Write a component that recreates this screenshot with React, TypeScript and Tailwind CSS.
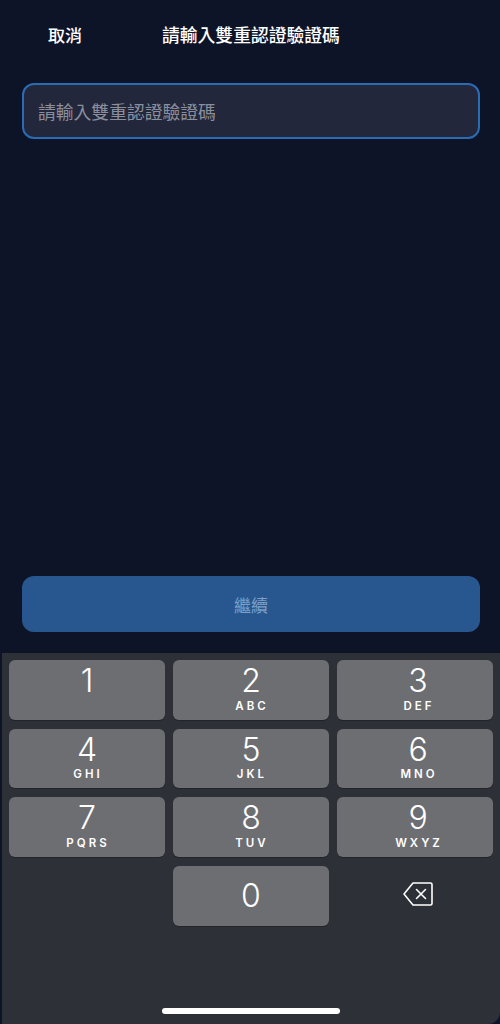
const KEYS: [string, string, boolean][] = [
  ["1", "", false],
  ["2", "ABC", false],
  ["3", "DEF", true],
  ["4", "GHI", false],
  ["5", "JKL", false],
  ["6", "MNO", true],
  ["7", "PQRS", false],
  ["8", "TUV", false],
  ["9", "WXYZ", true],
];

function Key({ digit, letters, shift }: { digit: string; letters: string; shift: boolean }) {
  return (
    <div className={`h-[59.67px] rounded-[6px] bg-[#6d6e72] shadow-[0_1px_0_#232429] flex flex-col items-center text-white ${shift ? "pl-[6px]" : ""}`}>
      <span className="h-[38.5px] text-[32px] leading-[42px] font-light">{digit}</span>
      {letters && (
        <span className="text-[11.5px] leading-[14px] font-semibold tracking-[3px] pl-[2px]">{letters}</span>
      )}
    </div>
  );
}

export default function App() {
  return (
    <div className="w-[500px] h-[1024px] flex flex-col bg-[#0e1428] font-['Inter','Noto_Sans_CJK_TC',sans-serif] overflow-hidden">
      <div className="h-[83px] shrink-0 flex items-start pt-[22px] text-white font-['Noto_Sans_CJK_TC',sans-serif] font-medium">
        <span className="ml-[48px] text-[17px] leading-[25px]">取消</span>
        <span className="ml-[80px] text-[17.8px] leading-[25px]">請輸入雙重認證驗證碼</span>
      </div>
      <div className="ml-[22px] mr-[20px] h-[56px] shrink-0 rounded-[12px] border-2 border-[#2a6cb4] bg-[#22273c] flex items-center pl-[14px] text-[17.8px] text-[#8b8f9d] font-['Noto_Sans_CJK_TC',sans-serif]">
        請輸入雙重認證驗證碼
      </div>
      <div className="flex-1" />
      <div className="ml-[22px] mr-[20px] mb-[21px] h-[56px] shrink-0 rounded-[12px] bg-[#28578f] flex items-center justify-center pt-[2px] text-[17px] text-[#7d9fc6] font-['Noto_Sans_CJK_TC',sans-serif]">
        繼續
      </div>
      <div className="h-[371px] shrink-0 bg-[#2e3037] rounded-br-[12px] ml-[2px] pt-[7px] pl-[7px] pr-[7px] flex flex-col">
        <div className="grid grid-cols-3 gap-x-[8px] gap-y-[9px]">
          {KEYS.map(([d, l, s]) => (
            <Key key={d} digit={d} letters={l} shift={s} />
          ))}
          <div />
          <div className="h-[59.67px] rounded-[6px] bg-[#6d6e72] shadow-[0_1px_0_#232429] flex items-center justify-center text-white text-[32px] font-light">
            0
          </div>
          <div className="h-[59.67px] flex items-center justify-center pl-[6px] pb-[3px]">
            <svg width="32" height="26" viewBox="0 0 32 26" fill="none" stroke="white" strokeWidth="1.6" strokeLinejoin="round" strokeLinecap="round">
              <path d="M11 2h17.5a1.5 1.5 0 0 1 1.5 1.5v19a1.5 1.5 0 0 1-1.5 1.5H11L2 13z" />
              <path d="M14.5 8.5l9 9M23.5 8.5l-9 9" />
            </svg>
          </div>
        </div>
        <div className="flex-1" />
        <div className="self-center mb-[10px] w-[178px] h-[6px] rounded-full bg-white" />
      </div>
    </div>
  );
}
